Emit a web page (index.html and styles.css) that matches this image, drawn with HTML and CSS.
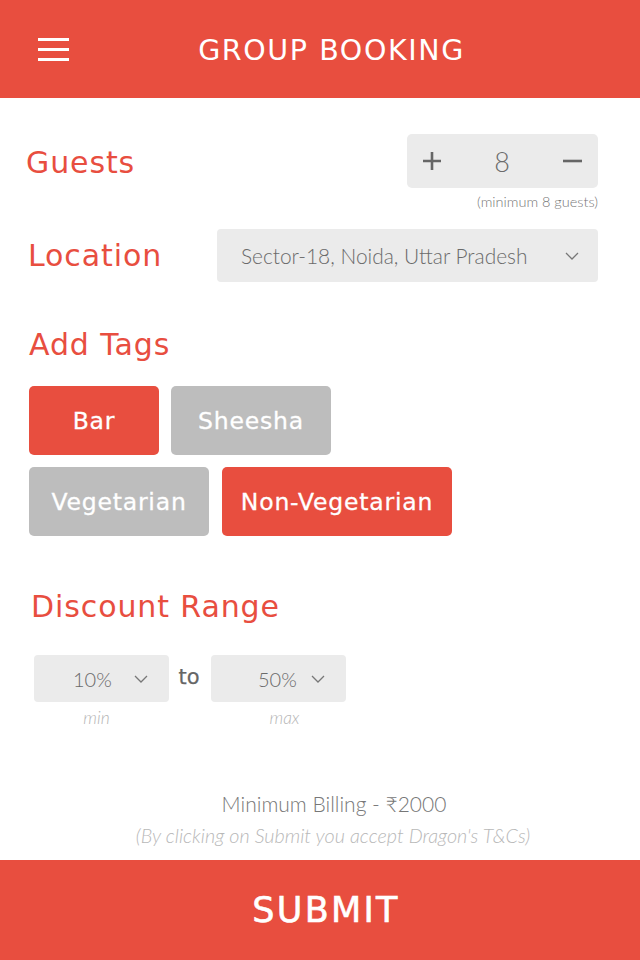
FILE: index.html
```html
<!DOCTYPE html>
<html lang="en">
<head>
<meta charset="utf-8">
<title>Group Booking</title>
<link rel="stylesheet" href="styles.css">
</head>
<body>
<div class="app">
  <header class="topbar">
    <button class="menu" aria-label="Menu"><span></span><span></span><span></span></button>
    <h1 class="title">GROUP BOOKING</h1>
  </header>

  <main class="form">
    <section class="row guests">
      <h2 class="label label-guests">Guests</h2>
      <div class="counter">
        <svg class="ctl" width="18" height="18" viewBox="0 0 18 18"><path d="M9 0V18M0 9H18" stroke="#666" stroke-width="2.6"/></svg>
        <span class="count">8</span>
        <svg class="ctl" width="19" height="18" viewBox="0 0 19 18"><path d="M0 9H19" stroke="#666" stroke-width="2.6"/></svg>
      </div>
    </section>
    <p class="hint">(minimum 8 guests)</p>

    <section class="row location">
      <h2 class="label label-loc">Location</h2>
      <div class="select select-loc">
        <span>Sector-18, Noida, Uttar Pradesh</span>
        <svg class="chev" width="14" height="8" viewBox="0 0 14 8"><path d="M1 1L7 7L13 1" fill="none" stroke="#777" stroke-width="1.3"/></svg>
      </div>
    </section>

    <h2 class="label tags-title">Add Tags</h2>
    <div class="tags">
      <button class="tag on tag-bar">Bar</button>
      <button class="tag off tag-sheesha">Sheesha</button>
      <button class="tag off tag-veg">Vegetarian</button>
      <button class="tag on tag-nonveg">Non-Vegetarian</button>
    </div>

    <h2 class="label discount-title">Discount Range</h2>
    <div class="range">
      <div class="range-col">
        <div class="select select-sm">
          <span>10%</span>
          <svg class="chev" width="14" height="8" viewBox="0 0 14 8"><path d="M1 1L7 7L13 1" fill="none" stroke="#777" stroke-width="1.3"/></svg>
        </div>
        <span class="sub sub-min">min</span>
      </div>
      <span class="to">to</span>
      <div class="range-col">
        <div class="select select-sm select-max">
          <span>50%</span>
          <svg class="chev" width="14" height="8" viewBox="0 0 14 8"><path d="M1 1L7 7L13 1" fill="none" stroke="#777" stroke-width="1.3"/></svg>
        </div>
        <span class="sub sub-max">max</span>
      </div>
    </div>
  </main>

  <footer class="foot">
    <p class="billing">Minimum Billing - ₹2000</p>
    <p class="terms">(By clicking on Submit you accept Dragon's T&amp;Cs)</p>
    <button class="submit">SUBMIT</button>
  </footer>
</div>
</body>
</html>
```

FILE: styles.css
```css
* { box-sizing: border-box; }
html, body { margin: 0; padding: 0; background: #fff; }
body { font-family: "Lato", "Open Sans", sans-serif; }
h1, h2, p { margin: 0; font-weight: normal; }
button { font: inherit; border: 0; padding: 0; background: none; cursor: pointer; }

.app {
  width: 640px;
  height: 960px;
  display: flex;
  flex-direction: column;
}

/* header */
.topbar {
  height: 98px;
  background: #e84e3f;
  display: grid;
  grid-template-columns: 100px 1fr 100px;
  align-items: center;
}
.menu {
  margin-left: 38px;
  width: 31px;
  height: 23px;
  display: flex;
  flex-direction: column;
  justify-content: space-between;
}
.menu span { display: block; height: 3px; background: #fff; }
.title {
  grid-column: 2;
  text-align: center;
  padding-left: 23px;
  padding-top: 2px;
  color: #fff;
  font-family: "DejaVu Sans", sans-serif;
  font-size: 28.5px;
  letter-spacing: 1.6px;
}

/* form */
.form {
  flex: 1;
  padding: 36px 42px 0 26px;
}
.label {
  font-family: "DejaVu Sans", sans-serif;
  font-size: 30px;
  line-height: 36px;
  letter-spacing: 0.9px;
  color: #e84e3f;
}
.row {
  display: flex;
  align-items: center;
  justify-content: space-between;
}
.label-guests { padding-top: 3px; }
.label-loc { margin-left: 2px; }

.counter {
  width: 191px;
  height: 54px;
  background: #ebebeb;
  border-radius: 5px;
  display: flex;
  align-items: center;
  justify-content: space-between;
  padding: 0 16px;
}
.count {
  font-size: 27px;
  color: #6b6b6b;
  font-weight: 300;
}
.hint {
  margin-top: 6px;
  text-align: right;
  font-size: 14.5px;
  line-height: 16px;
  font-weight: 300;
  color: #777;
}
.location { margin-top: 19px; }

.select {
  background: #ebebeb;
  border-radius: 4px;
  display: flex;
  align-items: center;
  justify-content: space-between;
  color: #6a6a6a;
}
.select-loc {
  width: 381px;
  height: 53px;
  padding: 0 19px 0 24px;
  font-size: 20.9px;
  font-weight: 300;
}

.tags-title { margin-top: 45px; margin-left: 3px; }
.tags {
  margin-top: 23px;
  margin-left: 3px;
  display: flex;
  flex-wrap: wrap;
  gap: 12px 12px;
  width: 440px;
}
.tag {
  height: 69px;
  border-radius: 5px;
  color: #fff;
  font-family: "DejaVu Sans", sans-serif;
  font-size: 23.5px;
  letter-spacing: 0.8px;
  -webkit-text-stroke: 0.3px #fff;
}
.tag.on { background: #e84e3f; }
.tag.off { background: #bdbdbd; }
.tag-bar { width: 130px; }
.tag-sheesha { width: 160px; }
.tag-veg { width: 180px; margin-right: 1px; }
.tag-nonveg { width: 230px; }

.discount-title { margin-top: 53px; margin-left: 5px; }

.range {
  margin-top: 30px;
  margin-left: 8px;
  display: flex;
  align-items: flex-start;
}
.range-col {
  display: flex;
  flex-direction: column;
  align-items: center;
}
.select-sm {
  width: 135px;
  height: 47px;
  padding: 0 21px 0 39px;
  font-size: 20px;
  font-weight: 300;
}
.select-max { padding-left: 47px; }
.sub {
  margin-top: 6px;
  font-size: 17.5px;
  line-height: 20px;
  font-style: italic;
  font-weight: 300;
  color: #b5b5b5;
}
.sub-min { margin-right: 10px; }
.sub-max { margin-left: 12px; }
.to {
  width: 22px;
  margin: 0 11px 0 9px;
  text-align: center;
  line-height: 45px;
  font-family: "DejaVu Sans", sans-serif;
  font-size: 21px;
  color: #666;
  -webkit-text-stroke: 0.25px #666;
}

/* footer */
.foot {
  display: flex;
  flex-direction: column;
  align-items: center;
}
.billing {
  padding-left: 28px;
  font-size: 21px;
  line-height: 24px;
  color: #777;
  font-weight: 300;
}
.terms {
  margin-top: 8px;
  padding-left: 26px;
  font-size: 19.8px;
  line-height: 22px;
  color: #b8b8b8;
  font-style: italic;
  font-weight: 300;
}
.submit {
  margin-top: 14px;
  width: 100%;
  height: 100px;
  background: #e84e3f;
  color: #fff;
  font-family: "DejaVu Sans", sans-serif;
  font-size: 35px;
  letter-spacing: 2.3px;
  padding-left: 12px;
  -webkit-text-stroke: 0.6px #fff;
}
```
